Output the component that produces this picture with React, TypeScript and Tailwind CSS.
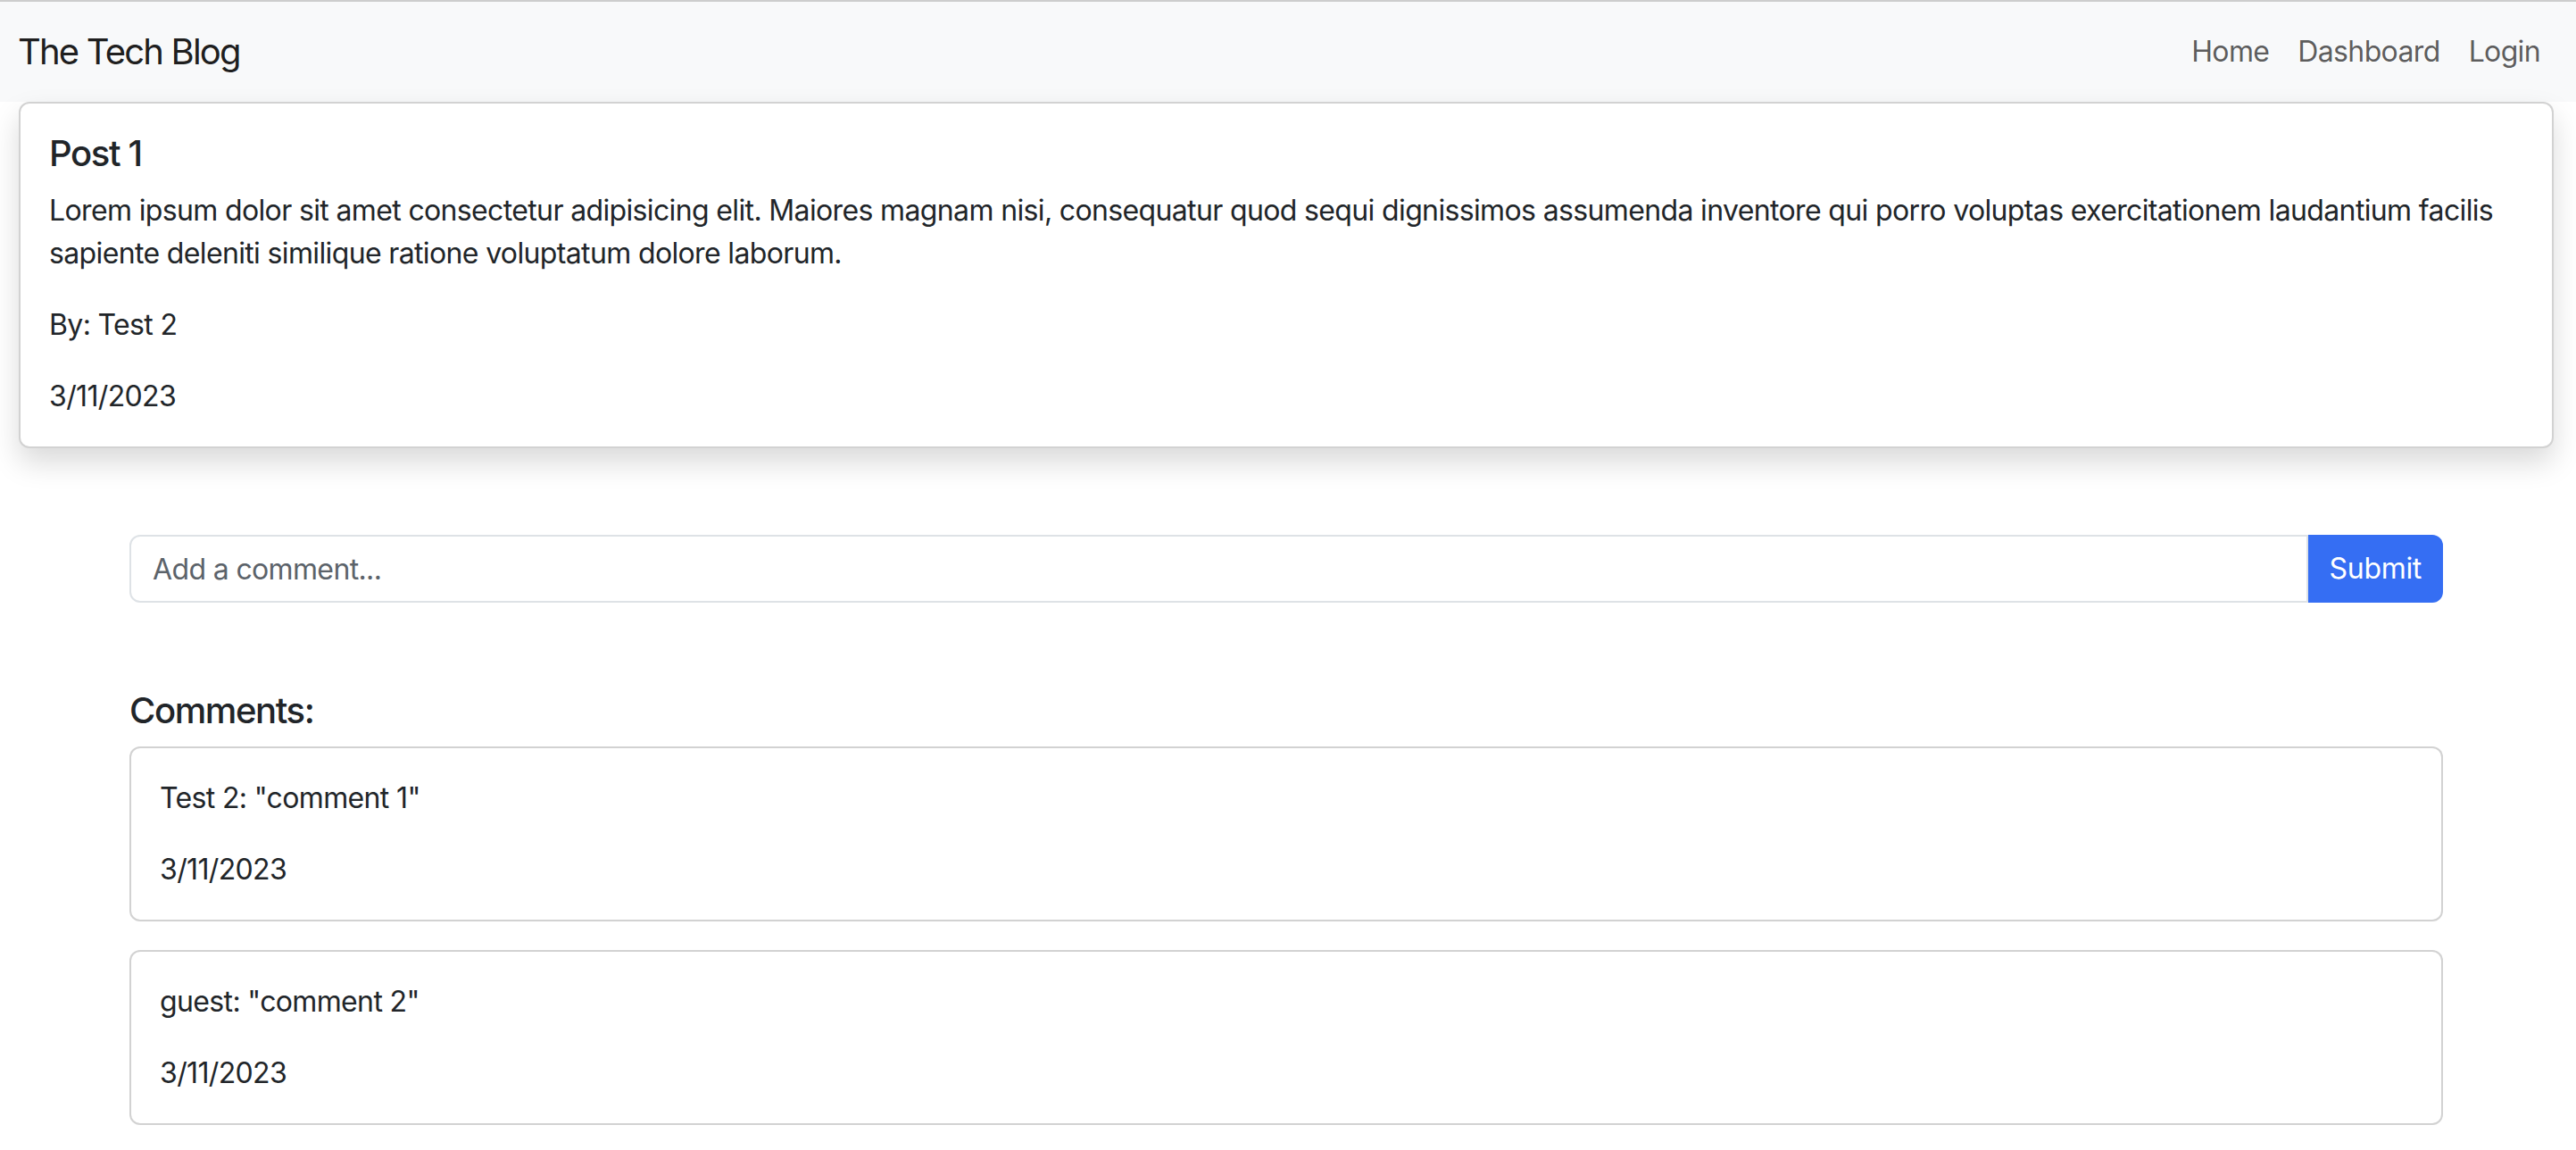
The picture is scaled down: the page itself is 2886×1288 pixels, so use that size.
const comments = [
  { author: "Test 2", body: "comment 1", date: "3/11/2023" },
  { author: "guest", body: "comment 2", date: "3/11/2023" },
];

const body = "text-[32px] leading-[48px] tracking-[-0.02em]";

export default function App() {
  return (
    <div className="min-h-screen bg-white font-['Inter',sans-serif] text-[#212529]">
      <nav className="flex items-center justify-between border-t-2 border-[#cdcdcd] bg-[#f8f9fa] pl-[20px] pr-[24px] py-[16px]">
        <a href="#" className="py-[10px] text-[40px] leading-[60px] tracking-[-0.045em] text-black/90">
          The Tech Blog
        </a>
        <ul className="flex">
          {["Home", "Dashboard", "Login"].map((link) => (
            <li key={link}>
              <a
                href="#"
                className="block px-[16px] py-[16px] text-[32px] leading-[48px] tracking-[-0.02em] text-black/65"
              >
                {link}
              </a>
            </li>
          ))}
        </ul>
      </nav>

      <div className="ml-[21px] mr-[25px] rounded-[12px] border-2 border-black/[0.175] bg-white p-[32px] shadow-[0_16px_32px_rgba(0,0,0,0.15)]">
        <h5 className="mb-[16px] text-[40px] font-medium leading-[48px] tracking-[-0.035em]">Post 1</h5>
        <p className={`mb-[32px] ${body}`}>
          Lorem ipsum dolor sit amet consectetur adipisicing elit. Maiores magnam nisi, consequatur quod sequi
          dignissimos assumenda inventore qui porro voluptas exercitationem laudantium facilis sapiente deleniti
          similique ratione voluptatum dolore laborum.
        </p>
        <p className={`mb-[32px] ${body}`}>By: Test 2</p>
        <p className={body}>3/11/2023</p>
      </div>

      <div className="ml-[121px] w-[2640px] px-[24px] pt-[97px]">
        <form className="flex" onSubmit={(e) => e.preventDefault()}>
          <input
            type="text"
            placeholder="Add a comment..."
            className="h-[76px] min-w-0 flex-1 rounded-l-[12px] border-2 border-[#dee2e6] px-[24px] text-[32px] tracking-[-0.02em] text-[#212529] outline-none placeholder:text-[#5c636a]"
          />
          <button
            type="submit"
            className="h-[76px] rounded-r-[12px] bg-[#356ef3] px-[24px] text-[32px] tracking-[-0.01em] text-white"
          >
            Submit
          </button>
        </form>

        <h5 className="mt-[97px] mb-[16px] text-[40px] font-medium leading-[48px] tracking-[-0.035em]">Comments:</h5>

        <div className="flex flex-col gap-[32px]">
          {comments.map((c) => (
            <div key={c.body} className="rounded-[12px] border-2 border-black/[0.175] bg-white p-[32px]">
              <p className={`mb-[32px] ${body}`}>
                {c.author}: "{c.body}"
              </p>
              <p className={body}>{c.date}</p>
            </div>
          ))}
        </div>
      </div>
    </div>
  );
}
